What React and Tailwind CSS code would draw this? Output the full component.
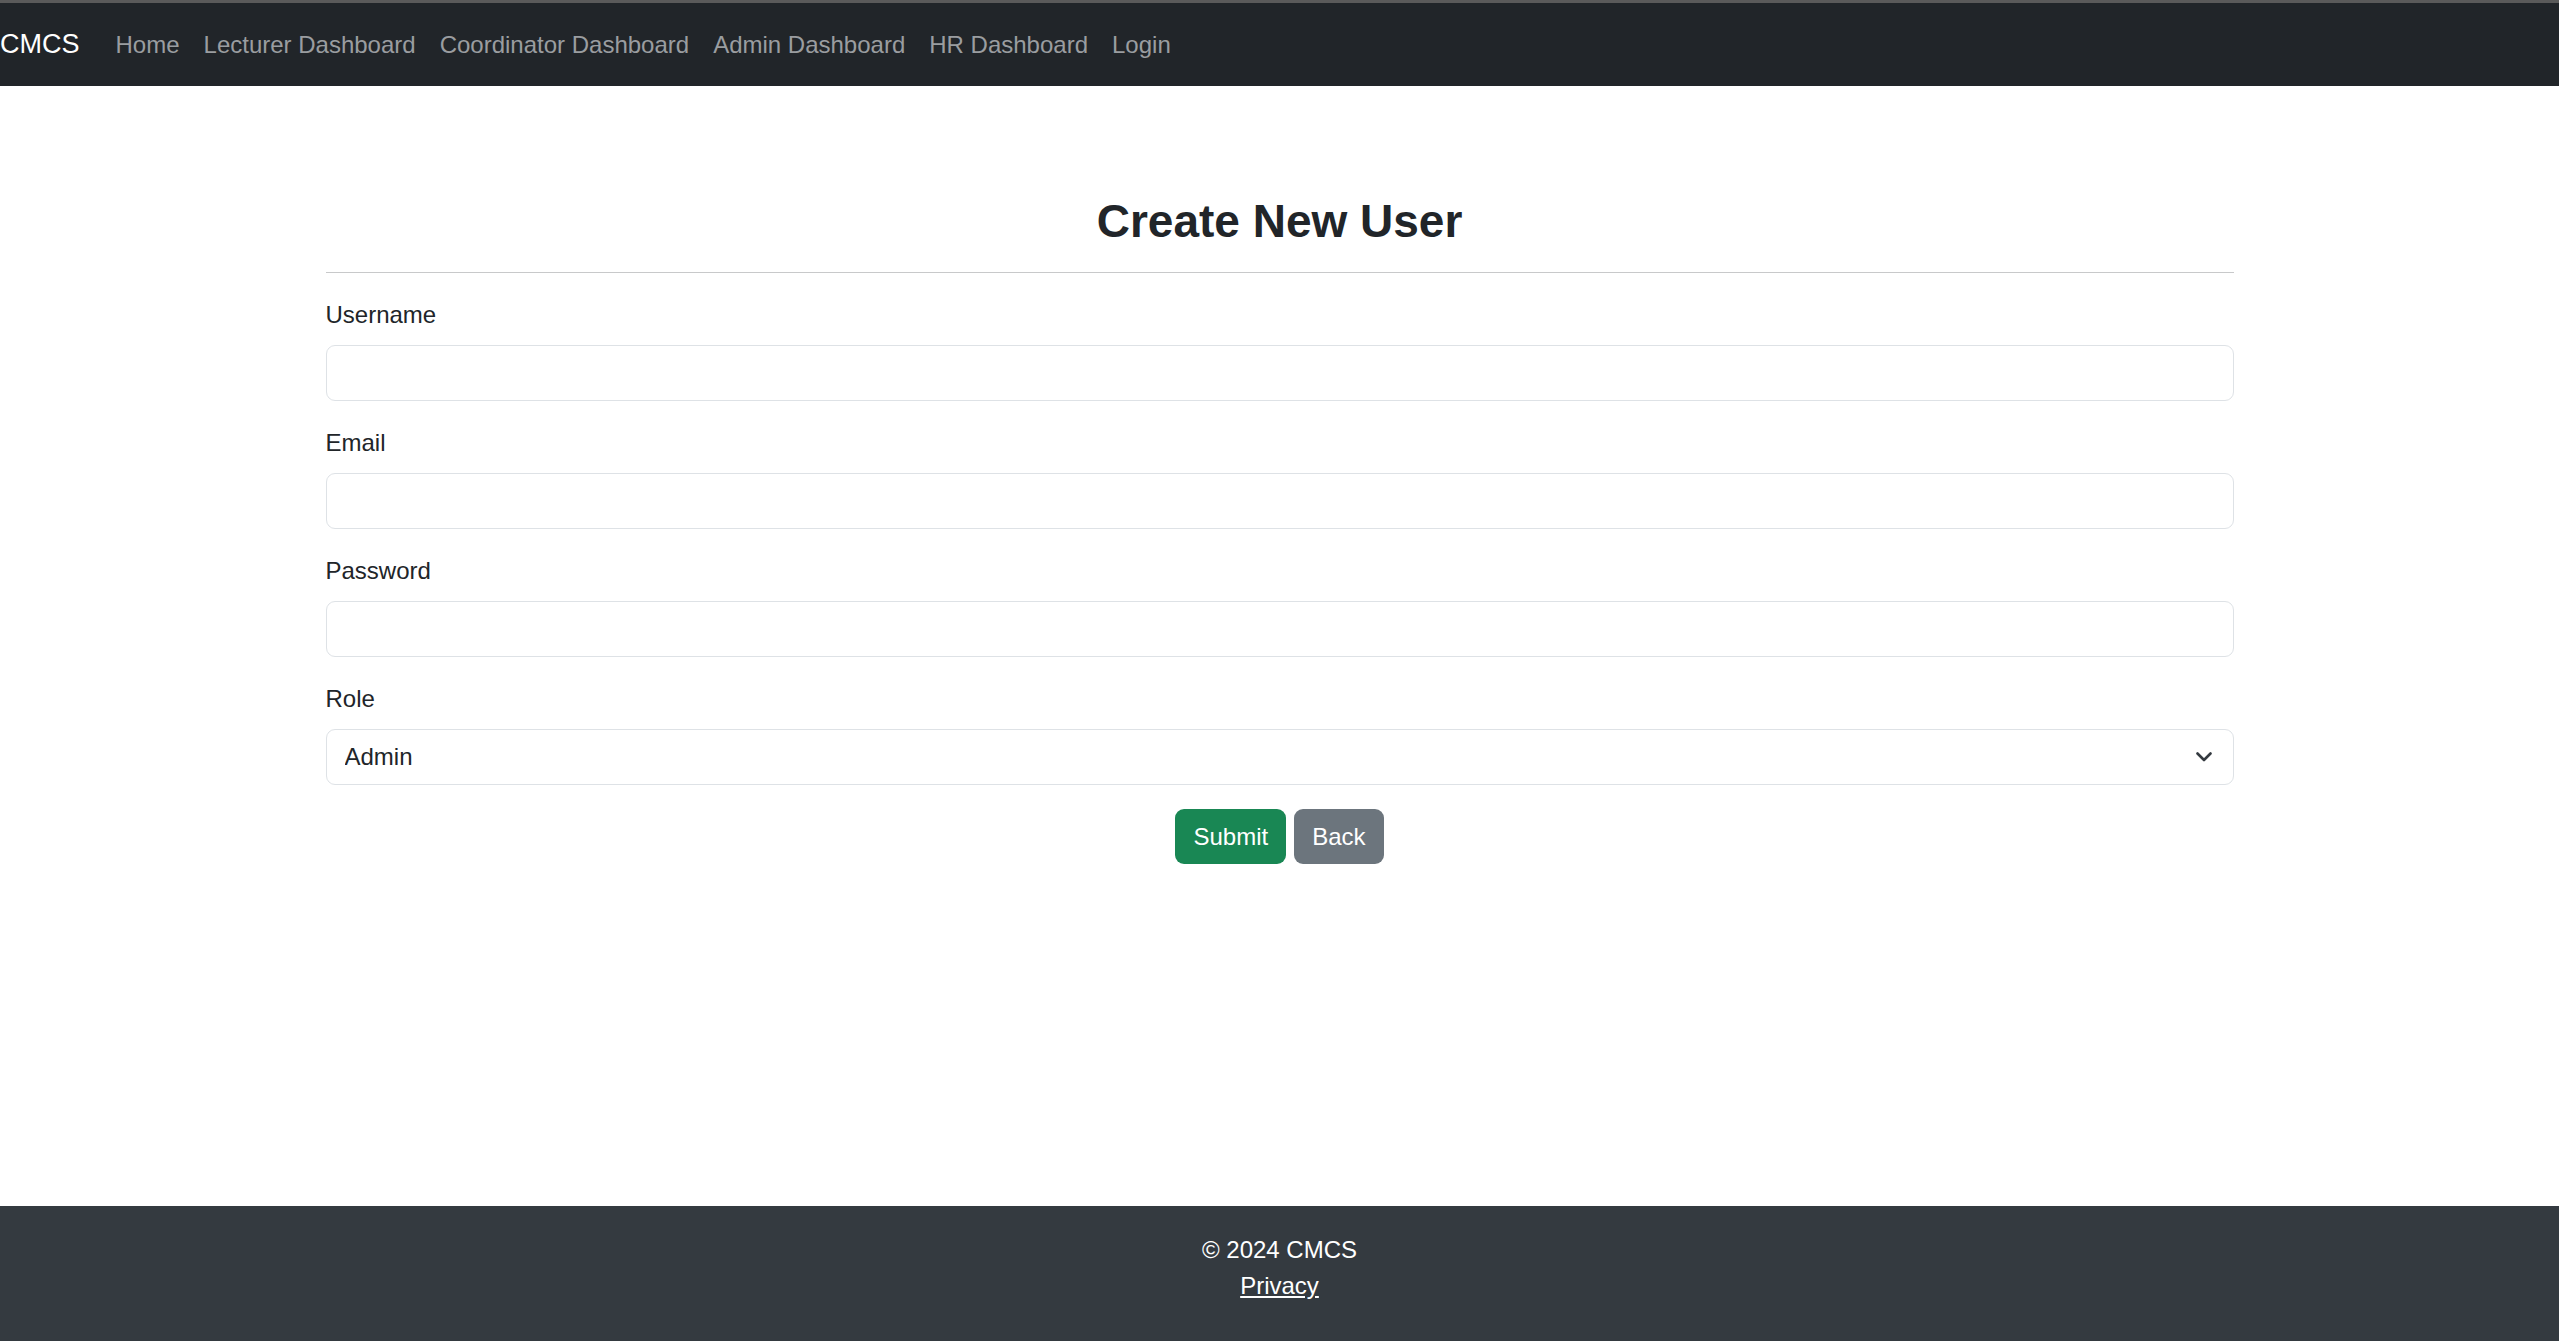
import React from 'react';

const links = ['Home', 'Lecturer Dashboard', 'Coordinator Dashboard', 'Admin Dashboard', 'HR Dashboard', 'Login'];

function Field({ label, type = 'text' }) {
    return (
        <div className="mb-6">
            <label className="block text-[24px] leading-[36px] text-[#212529] mb-3">{label}</label>
            <input
                type={type}
                className="block w-full h-[56px] px-[18px] border border-[#dee2e6] rounded-[9px] bg-white text-[24px] outline-none"
            />
        </div>
    );
}

export default function App() {
    return (
        <div className="min-h-screen flex flex-col bg-white" style={{ fontFamily: '"Liberation Sans", Arial, sans-serif' }}>
            <nav className="h-[86px] bg-[#212529] border-t-[3px] border-[#5a5a5a] flex items-center">
                <a className="text-[27px] leading-[45px] text-white mr-6">CMCS</a>
                <ul className="flex items-center">
                    {links.map((l) => (
                        <li key={l}>
                            <a className="block px-3 text-[24px] leading-[36px] text-[#9a9da0]">{l}</a>
                        </li>
                    ))}
                </ul>
            </nav>

            <main className="flex-1">
                <div className="w-[1908px] mx-auto pt-[107px]">
                    <h2 className="text-center text-[46px] leading-[57px] font-bold text-[#212529]">Create New User</h2>
                    <hr className="mt-[22px] mb-6 border-0 h-px bg-[#c8c9ca]" />

                    <Field label="Username" />
                    <Field label="Email" type="email" />
                    <Field label="Password" type="password" />

                    <div className="mb-6">
                        <label className="block text-[24px] leading-[36px] text-[#212529] mb-3">Role</label>
                        <div className="relative">
                            <select className="block w-full h-[56px] pl-[18px] pr-12 border border-[#dee2e6] rounded-[9px] bg-white text-[24px] text-[#212529] appearance-none outline-none">
                                <option>Admin</option>
                                <option>Lecturer</option>
                                <option>Coordinator</option>
                                <option>HR</option>
                            </select>
                            <svg className="absolute right-[22px] top-[23px] pointer-events-none" width="16" height="10" viewBox="0 0 16 10" fill="none">
                                <path d="M1.5 1.5 L8 8 L14.5 1.5" stroke="#343a40" strokeWidth="2.6" strokeLinecap="round" strokeLinejoin="round" />
                            </svg>
                        </div>
                    </div>

                    <div className="flex justify-center gap-2">
                        <button className="h-[55px] px-[18px] rounded-[9px] bg-[#198754] text-white text-[24px]">Submit</button>
                        <button className="h-[55px] px-[18px] rounded-[9px] bg-[#6c757d] text-white text-[24px]">Back</button>
                    </div>
                </div>
            </main>

            <footer className="h-[135px] bg-[#343a40] text-white text-center pt-[26px]">
                <div className="text-[24px] leading-[36px]">© 2024 CMCS</div>
                <a className="text-[24px] leading-[36px] underline text-white">Privacy</a>
            </footer>
        </div>
    );
}
